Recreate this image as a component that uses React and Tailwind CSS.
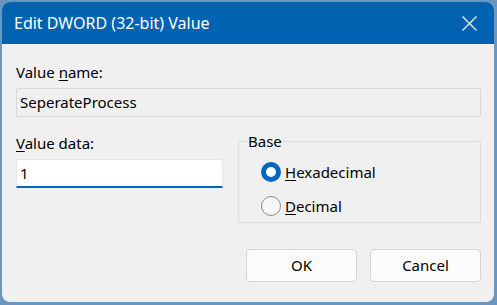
export default function App() {
  const font = { fontFamily: '"Noto Sans", "Liberation Sans", sans-serif' };
  return (
    <div className="w-[497px] h-[305px] bg-[#6b96bf] pt-[2px] pl-[2px] pr-[3px] pb-[3px]" style={font}>
      <div className="w-full h-full flex flex-col rounded-[8px] overflow-hidden bg-[#f0f0f0]">
        {/* Title bar */}
        <div className="h-[42px] shrink-0 bg-[#0063b1] flex items-center justify-between pl-[12px] pr-[17px]">
          <span className="text-white text-[16px] leading-none">Edit DWORD (32-bit) Value</span>
          <svg width="15" height="15" viewBox="0 0 15 15" className="mt-[1px]">
            <path d="M0.5 0.5 L14.5 14.5 M14.5 0.5 L0.5 14.5" stroke="white" strokeWidth="1.2" />
          </svg>
        </div>

        {/* Body */}
        <div className="flex flex-col pl-[14px] pr-[13px] text-[15px] text-black">
          <div className="mt-[18px] leading-[20px]">
            Value <span className="underline underline-offset-2">n</span>ame:
          </div>
          <div className="mt-[6px] h-[29px] border border-[#d9d9d9] rounded-[2px] bg-[#f0f0f0] flex items-center pl-[3px] leading-none">
            SeperateProcess
          </div>

          <div className="flex mt-[15px] gap-[15px]">
            <div className="w-[207px] flex flex-col">
              <div className="mt-[1px] leading-[20px]">
                <span className="underline underline-offset-2">V</span>alue data:
              </div>
              <div className="mt-[6px] h-[29px] bg-white border border-[#e5e5e5] border-b-2 border-b-[#0067c0] rounded-t-[3px] flex items-center pl-[3px] leading-none">
                1
              </div>
            </div>

            <fieldset className="flex-1 h-[92px] border border-[#dcdcdc] rounded-[2px] px-[8px] -mt-[1px]">
              <legend className="px-[1px] leading-[20px]">Base</legend>
              <div className="flex flex-col pl-[14px] mt-[11px] gap-[14px]">
                <div className="flex items-center gap-[4px] leading-[20px]">
                  <span className="w-[20px] h-[20px] rounded-full bg-[#0067c0] flex items-center justify-center">
                    <span className="w-[10px] h-[10px] rounded-full bg-white" />
                  </span>
                  <span>
                    <span className="underline underline-offset-2">H</span>exadecimal
                  </span>
                </div>
                <div className="flex items-center gap-[4px] leading-[20px]">
                  <span className="w-[20px] h-[20px] rounded-full border border-[#8a8a8a] bg-[#f7f7f7]" />
                  <span>
                    <span className="underline underline-offset-2">D</span>ecimal
                  </span>
                </div>
              </div>
            </fieldset>
          </div>

          <div className="flex justify-end gap-[13px] mt-[26px]">
            <button className="w-[111px] h-[33px] bg-[#fbfbfb] border border-[#d4d4d4] rounded-[4px] text-[15px] leading-none">
              OK
            </button>
            <button className="w-[111px] h-[33px] bg-[#fbfbfb] border border-[#d4d4d4] rounded-[4px] text-[15px] leading-none">
              Cancel
            </button>
          </div>
        </div>
      </div>
    </div>
  );
}
